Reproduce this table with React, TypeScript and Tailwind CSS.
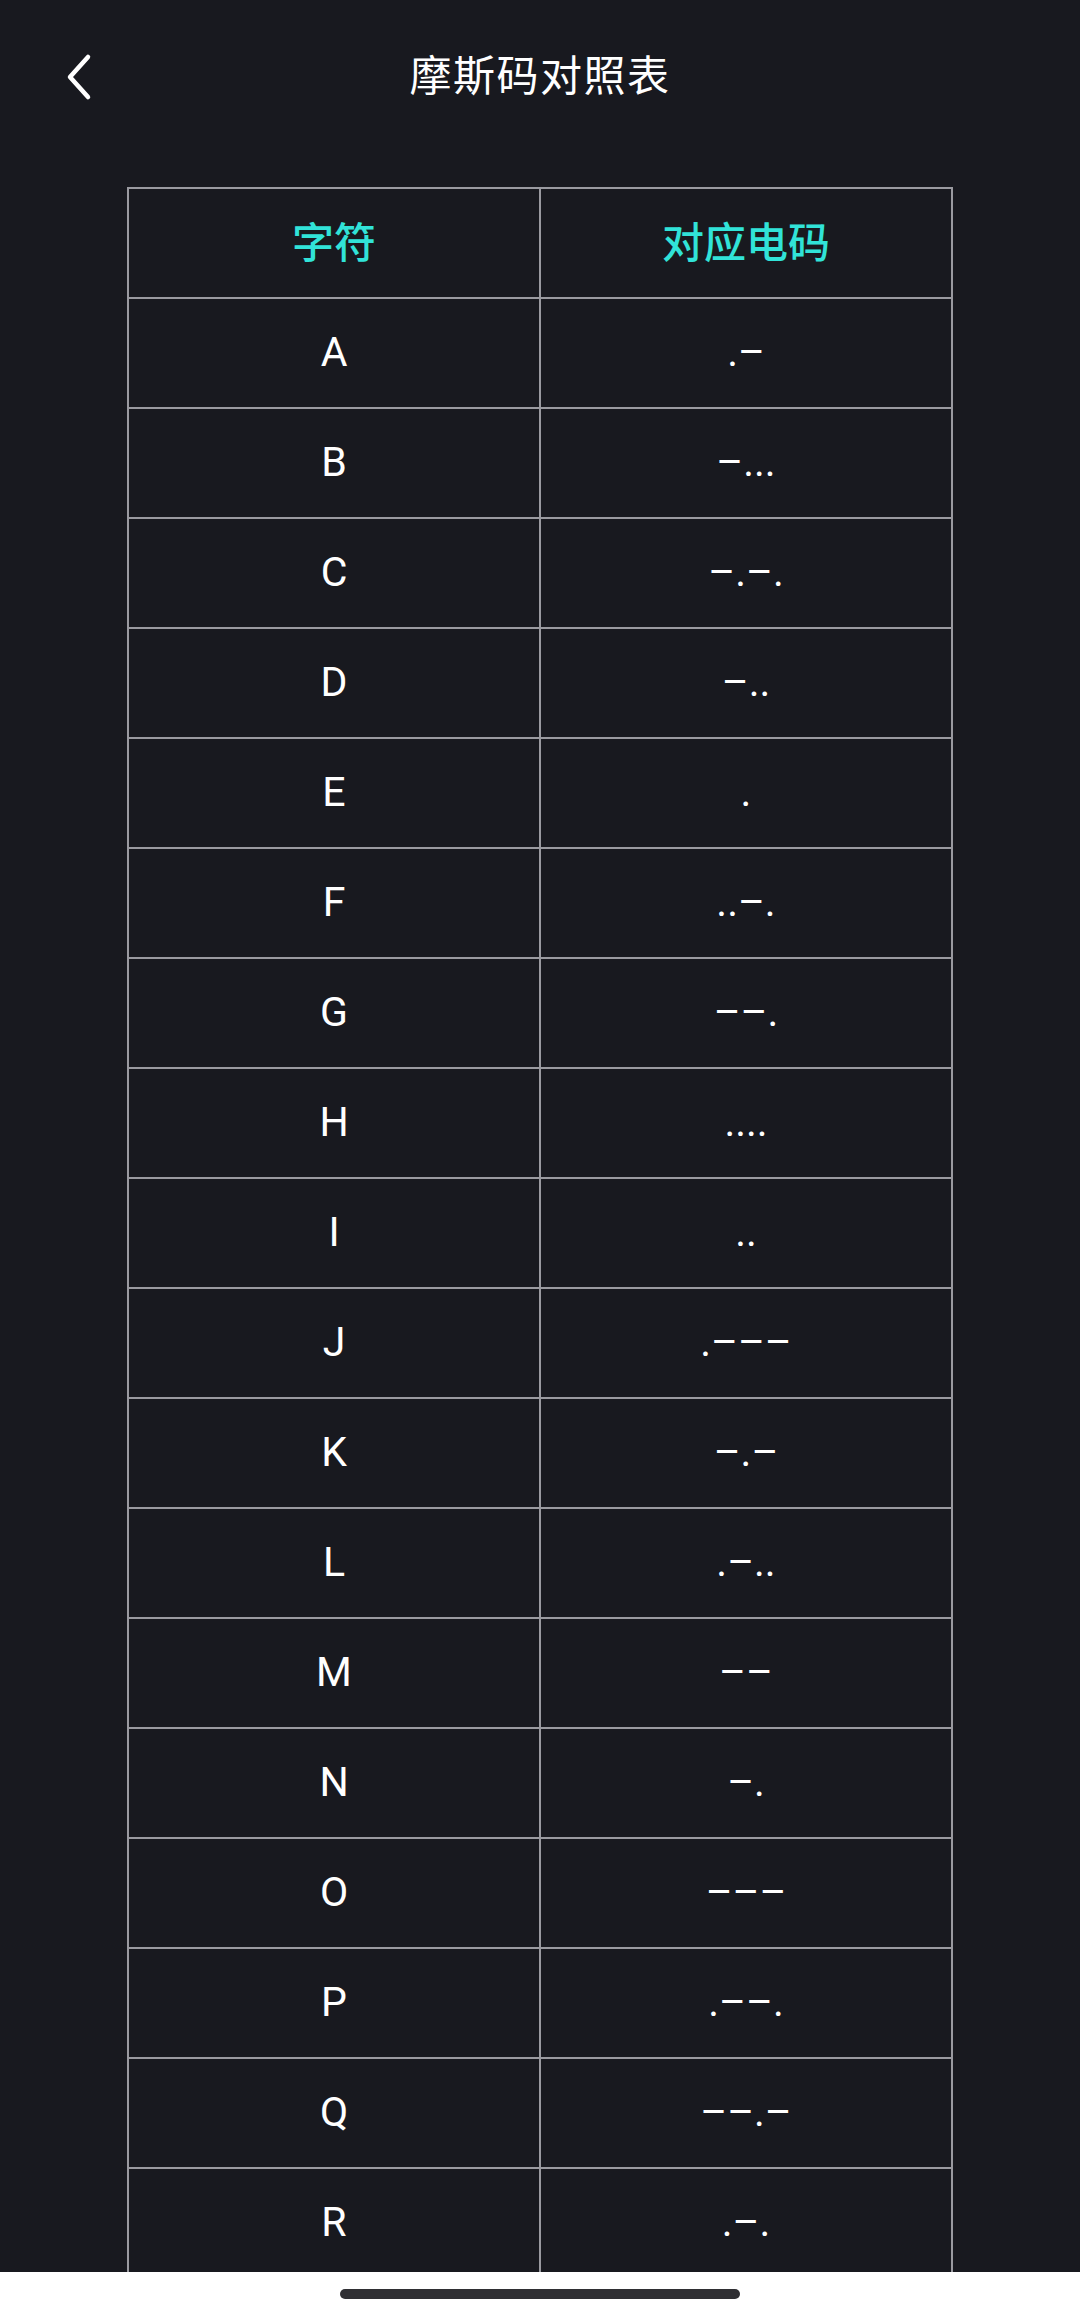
import React from 'react';

const MORSE: [string, string][] = [
  ['A', '.–'],
  ['B', '–...'],
  ['C', '–.–.'],
  ['D', '–..'],
  ['E', '.'],
  ['F', '..–.'],
  ['G', '––.'],
  ['H', '....'],
  ['I', '..'],
  ['J', '.–––'],
  ['K', '–.–'],
  ['L', '.–..'],
  ['M', '––'],
  ['N', '–.'],
  ['O', '–––'],
  ['P', '.––.'],
  ['Q', '––.–'],
  ['R', '.–.'],
];

const App: React.FC = () => {
  return (
    <div
      className="w-[1080px] h-[2316px] flex flex-col overflow-hidden bg-[#18191f]"
      style={{ fontFamily: 'Roboto, "Noto Sans CJK SC", sans-serif' }}
    >
      {/* Header */}
      <div className="relative h-[154px] flex items-center justify-center shrink-0">
        <button className="absolute left-[56px] top-[46px] w-[44px] h-[62px] flex items-center justify-center">
          <svg width="34" height="52" viewBox="0 0 34 52">
            <polyline
              points="27,6 9,26 27,46"
              fill="none"
              stroke="#ffffff"
              strokeWidth="4.5"
              strokeLinecap="round"
              strokeLinejoin="round"
            />
          </svg>
        </button>
        <h1 className="text-[42px] leading-none text-white font-normal tracking-[1.5px]">摩斯码对照表</h1>
      </div>

      {/* Table */}
      <div className="flex-1 overflow-hidden pt-[33px]">
        <table className="mx-auto w-[826px] table-fixed border-collapse">
          <thead>
            <tr className="h-[110px]">
              <th className="border-2 border-[#9a9aa0] text-[#31e3d8] text-[42px] font-medium text-center align-middle">
                字符
              </th>
              <th className="border-2 border-[#9a9aa0] text-[#31e3d8] text-[42px] font-medium text-center align-middle">
                对应电码
              </th>
            </tr>
          </thead>
          <tbody>
            {MORSE.map(([ch, code]) => (
              <tr key={ch} className="h-[110px]">
                <td className="border-2 border-[#9a9aa0] text-white text-[41px] text-center align-middle">
                  {ch}
                </td>
                <td className="border-2 border-[#9a9aa0] text-white text-[41px] text-center align-middle">
                  {code}
                </td>
              </tr>
            ))}
          </tbody>
        </table>
      </div>

      {/* Home indicator */}
      <div className="h-[44px] shrink-0 bg-white flex justify-center pt-[17px]">
        <div className="w-[400px] h-[10px] rounded-full bg-[#2f2f33]" />
      </div>
    </div>
  );
};

export default App;
